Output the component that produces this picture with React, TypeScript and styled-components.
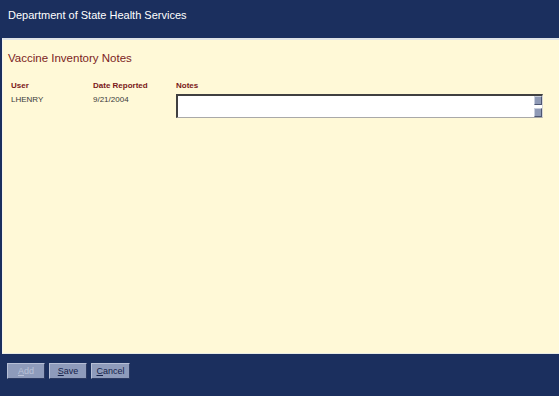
import React from "react";
import styled, { createGlobalStyle } from "styled-components";

const GlobalStyle = createGlobalStyle`
	html, body {
		margin: 0;
		padding: 0;
		background: #1b2f5e;
		font-family: "Liberation Sans", Arial, sans-serif;
	}
`;

const Page = styled.div`
	width: 559px;
	height: 396px;
	display: flex;
	flex-direction: column;
	background: #1b2f5e;
	overflow: hidden;
`;

const Header = styled.div`
	height: 38px;
	padding: 9px 0 0 8px;
	box-sizing: border-box;
	color: #ffffff;
	font-size: 11px;
`;

const Content = styled.div`
	flex: 1;
	margin-left: 2px;
	background: #fff9d7;
	border-top: 2px solid #dfe3e6;
	border-left: 1px solid #f4f4ee;
	border-bottom: 1px solid #e8ebe4;
	padding: 12px 0 0 5px;
`;

const Title = styled.div`
	color: #7c1d1d;
	font-size: 11.5px;
	margin-bottom: 17px;
`;

const Grid = styled.div`
	display: grid;
	grid-template-columns: 82px 83px 367px;
	row-gap: 3px;
	padding-left: 3px;
`;

const HeadCell = styled.div`
	color: #7a1717;
	font-size: 8px;
	font-weight: bold;
`;

const Cell = styled.div`
	color: #3a3a3a;
	font-size: 8px;
	padding-top: 2px;
`;

const NoteBox = styled.div`
	height: 24px;
	margin-top: 1px;
	display: flex;
	background: #ffffff;
	border-top: 2px solid #404040;
	border-left: 2px solid #404040;
	border-bottom: 1px solid #a9a9a9;
	border-right: 1px solid #d8d8d8;
	box-sizing: border-box;
`;

const NoteInput = styled.div`
	flex: 1;
`;

const ScrollBar = styled.div`
	width: 8px;
	display: flex;
	flex-direction: column;
	justify-content: space-between;
`;

const ScrollButton = styled.div`
	height: 9px;
	background: #8f9ab6;
	border-top: 1px solid #c9cfdd;
	border-left: 1px solid #c9cfdd;
	border-right: 1px solid #4d5673;
	border-bottom: 1px solid #4d5673;
	box-sizing: border-box;
`;

const Footer = styled.div`
	height: 42px;
	display: flex;
	gap: 4px;
	padding: 9px 0 0 7px;
	box-sizing: border-box;
`;

const Button = styled.button<{ $disabled?: boolean; $wide?: boolean }>`
	height: 16px;
	padding: 0;
	width: ${(p) => (p.$wide ? "39px" : "38px")};
	background: #8e9bbb;
	color: ${(p) => (p.$disabled ? "#b9c2d8" : "#15224a")};
	border: none;
	border-top: 1px solid #b6bfd6;
	border-left: 1px solid #b6bfd6;
	border-right: 1px solid #2c3a62;
	border-bottom: 1px solid #2c3a62;
	font-family: "Liberation Sans", Arial, sans-serif;
	font-size: 9px;
	cursor: default;
	u {
		text-decoration: underline;
	}
`;

export default function App() {
	return (
		<Page>
			<GlobalStyle />
			<Header>Department of State Health Services</Header>
			<Content>
				<Title>Vaccine Inventory Notes</Title>
				<Grid>
					<HeadCell>User</HeadCell>
					<HeadCell>Date Reported</HeadCell>
					<HeadCell>Notes</HeadCell>
					<Cell>LHENRY</Cell>
					<Cell>9/21/2004</Cell>
					<NoteBox>
						<NoteInput />
						<ScrollBar>
							<ScrollButton />
							<ScrollButton />
						</ScrollBar>
					</NoteBox>
				</Grid>
			</Content>
			<Footer>
				<Button $disabled><u>A</u>dd</Button>
				<Button><u>S</u>ave</Button>
				<Button $wide><u>C</u>ancel</Button>
			</Footer>
		</Page>
	);
}
